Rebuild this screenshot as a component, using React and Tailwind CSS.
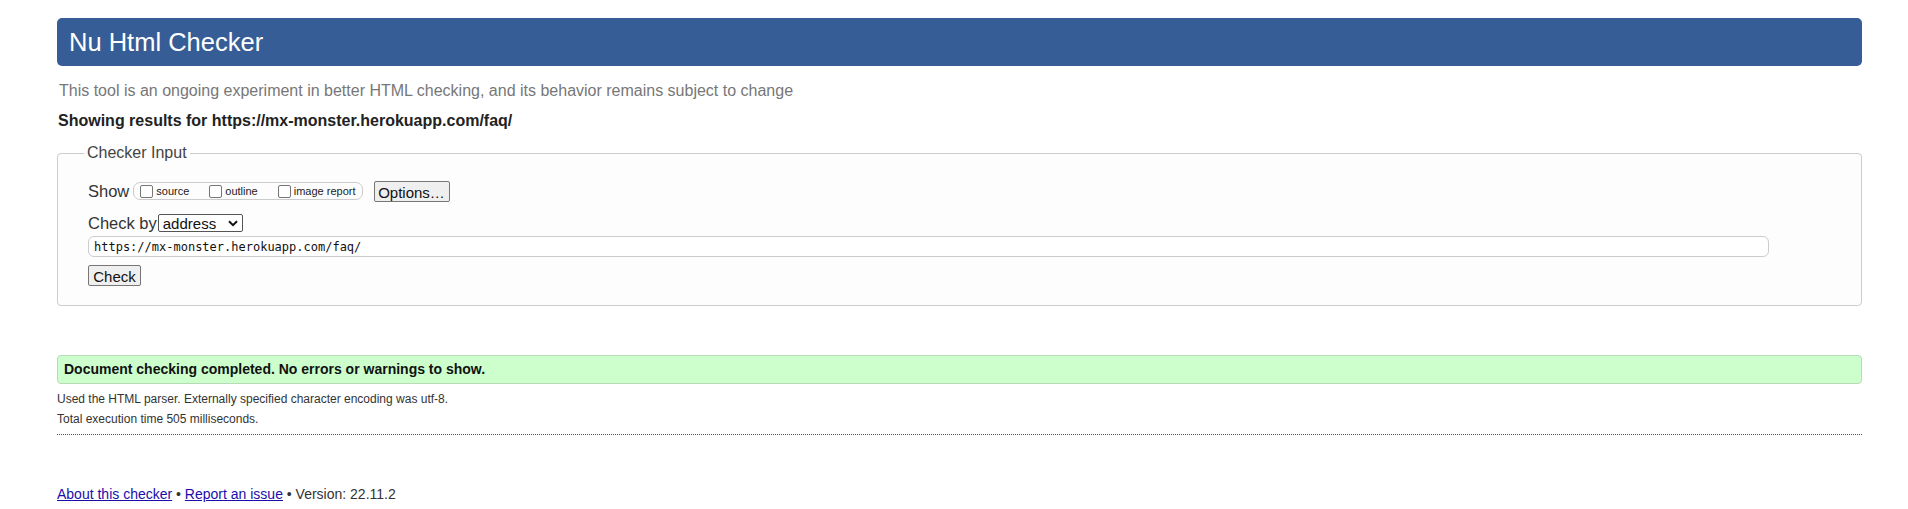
import React from "react";

function Checkbox({ label }) {
  return (
    <label className="flex items-center gap-[3px] whitespace-nowrap">
      <span className="inline-block w-[13px] h-[13px] border border-[#767676] rounded-[2px] bg-white" />
      <span className="text-[11px] text-[#222]">{label}</span>
    </label>
  );
}

export default function App() {
  return (
    <div className="min-h-[509px] bg-white pl-[57px] pr-[46px] pt-[18px] font-['Liberation_Sans',Arial,sans-serif] text-[#222]">
      <h1 className="h-[48px] flex items-center rounded-[5px] bg-[#365d95] px-[12px] text-[25.5px] text-white">
        Nu Html Checker
      </h1>

      <p className="mt-[15px] h-[20px] leading-[20px] pl-[2px] text-[16px] text-[#777]">
        This tool is an ongoing experiment in better HTML checking, and its behavior remains subject to change
      </p>
      <p className="mt-[10px] h-[20px] leading-[20px] pl-[1px] text-[16px] font-bold text-[#222]">
        Showing results for https://mx-monster.herokuapp.com/faq/
      </p>

      <fieldset className="mt-[13px] rounded-[4px] border border-[#cccccc] bg-[#fdfdfd] p-0">
        <legend className="ml-[26px] px-[3px] text-[16px] leading-[18px] text-[#444]">Checker Input</legend>

        <div className="pl-[30px] pr-[92px] pb-[16px]">
          <div className="mt-[18px] flex items-center h-[22px]">
            <span className="text-[16.5px] text-[#333] mr-[4px]">Show</span>
            <div className="flex items-center h-[18px] rounded-[7px] border border-[#cccccc] pl-[6px] pr-[6px]">
              <Checkbox label="source" />
              <span className="w-[20px]" />
              <Checkbox label="outline" />
              <span className="w-[20px]" />
              <Checkbox label="image report" />
            </div>
            <button className="ml-[11px] h-[21px] w-[76px] rounded-[2px] border border-[#767676] bg-[#efefef] text-[15px] text-[#111]">
              Options…
            </button>
          </div>

          <div className="mt-[11px] flex items-center h-[20px]">
            <span className="text-[16.5px] text-[#333] mr-[1px]">Check by</span>
            <div className="flex items-center justify-between h-[18px] w-[85px] rounded-[2px] border border-[#555] bg-white pl-[4px] pr-[4px]">
              <span className="text-[15px] text-[#111] leading-none">address</span>
              <svg width="10" height="7" viewBox="0 0 10 7" className="text-[#111]">
                <path d="M1 1.2 L5 5.2 L9 1.2" fill="none" stroke="currentColor" strokeWidth="2" />
              </svg>
            </div>
          </div>

          <div className="mt-[3px] flex items-center h-[21px] rounded-[6px] border border-[#cccccc] bg-white pl-[5px]">
            <span className="font-['DejaVu_Sans_Mono',monospace] text-[12px] text-[#111]">
              https://mx-monster.herokuapp.com/faq/
            </span>
          </div>

          <button className="mt-[8px] h-[21px] w-[53px] rounded-[2px] border border-[#767676] bg-[#efefef] text-[15px] text-[#111]">
            Check
          </button>
        </div>
      </fieldset>

      <div className="mt-[49px] h-[29px] flex items-center rounded-[4px] border border-[#b7dbb7] bg-[#ccffcc] pl-[6px]">
        <span className="text-[14px] font-bold text-[#111]">
          Document checking completed. No errors or warnings to show.
        </span>
      </div>

      <p className="mt-[5px] h-[20px] leading-[20px] text-[12px] text-[#333]">
        Used the HTML parser. Externally specified character encoding was utf-8.
      </p>
      <p className="h-[20px] leading-[20px] text-[12px] text-[#333]">
        Total execution time 505 milliseconds.
      </p>
      <div className="mt-[5px] border-t border-dotted border-[#555]" />

      <p className="mt-[49px] text-[14px] leading-[20px] text-[#333]">
        <a href="#" className="text-[#1a0dab] underline">About this checker</a>
        {" • "}
        <a href="#" className="text-[#1a0dab] underline">Report an issue</a>
        {" • Version: 22.11.2"}
      </p>
    </div>
  );
}
